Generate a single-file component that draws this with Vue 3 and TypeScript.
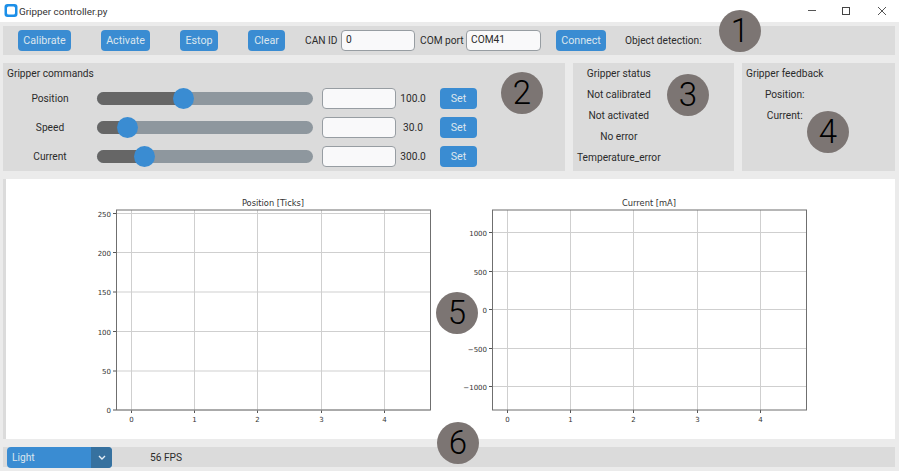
<script setup lang="ts">
interface Slider { label: string; value: string; frac: number }
interface Chart { title: string; xTicks: number[]; yTicks: { label: string; y: number }[] }

const sliders: Slider[] = [
  { label: 'Position', value: '100.0', frac: 0.388 },
  { label: 'Speed', value: '30.0', frac: 0.1 },
  { label: 'Current', value: '300.0', frac: 0.19 },
]

const status = ['Gripper status', 'Not calibrated', 'Not activated', 'No error', 'Temperature_error']
const feedback = ['Gripper feedback', 'Position:', 'Current:']

const charts: Chart[] = [
  {
    title: 'Position [Ticks]',
    xTicks: [51, 114, 177, 241, 304],
    yTicks: [
      { label: '0', y: 231 },
      { label: '50', y: 192 },
      { label: '100', y: 152.5 },
      { label: '150', y: 113 },
      { label: '200', y: 73.5 },
      { label: '250', y: 34.5 },
    ],
  },
  {
    title: 'Current [mA]',
    xTicks: [51, 114, 177, 241, 304],
    yTicks: [
      { label: '\u22121000', y: 207.5 },
      { label: '\u2212500', y: 169.5 },
      { label: '0', y: 130.5 },
      { label: '500', y: 92.5 },
      { label: '1000', y: 53.5 },
    ],
  },
]

const badges = [
  { n: 1, x: 740, y: 31 },
  { n: 2, x: 522, y: 93 },
  { n: 3, x: 688, y: 95 },
  { n: 4, x: 828, y: 132 },
  { n: 5, x: 457, y: 313 },
  { n: 6, x: 458, y: 443 },
]
</script>

<template>
  <div class="window">
    <header class="titlebar">
      <svg class="app-icon" width="14" height="14" viewBox="0 0 14 14">
        <rect x="0.5" y="0" width="13" height="13" rx="3" fill="#1c8fe8" />
        <rect x="3" y="2.5" width="8" height="8" rx="1.5" fill="#fff" />
      </svg>
      <span class="app-title">Gripper controller.py</span>
      <svg class="win-controls" width="78" height="8" viewBox="0 0 78 8">
        <path d="M0 3.5H8" stroke="#555" fill="none" />
        <rect x="34.5" y="0.5" width="7" height="7" stroke="#444" fill="none" />
        <path d="M70 0L78 8M78 0L70 8" stroke="#555" fill="none" />
      </svg>
    </header>

    <section class="toolbar panel">
      <button class="btn calibrate">Calibrate</button>
      <button class="btn activate">Activate</button>
      <button class="btn estop">Estop</button>
      <button class="btn clear">Clear</button>
      <span class="can-label">CAN ID</span>
      <div class="entry can-entry">0</div>
      <span class="com-label">COM port</span>
      <div class="entry com-entry">COM41</div>
      <button class="btn connect">Connect</button>
      <span class="detect-label">Object detection:</span>
    </section>

    <section class="middle">
      <div class="panel commands">
        <div class="cmd-title">Gripper commands</div>
        <div v-for="s in sliders" :key="s.label" class="cmd-row">
          <span class="cmd-label">{{ s.label }}</span>
          <div class="slider">
            <div class="slider-fill" :style="{ width: `${s.frac * 195 + 10}px` }" />
            <div class="slider-thumb" :style="{ left: `${s.frac * 195}px` }" />
          </div>
          <div class="entry cmd-entry" />
          <span class="cmd-value">{{ s.value }}</span>
          <button class="btn set">Set</button>
        </div>
      </div>
      <div class="panel info status">
        <div class="info-col">
          <span v-for="t in status" :key="t">{{ t }}</span>
        </div>
      </div>
      <div class="panel info feedback">
        <div class="info-col">
          <span v-for="t in feedback" :key="t">{{ t }}</span>
        </div>
      </div>
    </section>

    <section class="plots">
      <svg v-for="c in charts" :key="c.title" class="chart" width="360" height="260" viewBox="0 0 360 260">
        <text x="193" y="26.5" class="chart-title" text-anchor="middle">{{ c.title }}</text>
        <g v-for="(x, i) in c.xTicks" :key="x">
          <path :d="`M${x + 0.5} 31V231`" class="grid" />
          <path :d="`M${x + 0.5} 231V234`" class="tick" />
          <text :x="x + 0.5" y="243" class="tick-label" text-anchor="middle">{{ i }}</text>
        </g>
        <g v-for="t in c.yTicks" :key="t.label">
          <path :d="`M36 ${t.y}H350`" class="grid" />
          <path :d="`M33 ${t.y}H36`" class="tick" />
          <text x="31" :y="t.y + 3" class="tick-label" text-anchor="end">{{ t.label }}</text>
        </g>
        <rect x="36.5" y="31" width="314" height="200" class="frame" />
      </svg>
    </section>

    <footer class="panel bottom">
      <div class="theme-select">
        <span class="theme-text">Light</span>
        <span class="theme-arrow">
          <svg width="8" height="5" viewBox="0 0 8 5"><path d="M1 1L4 4L7 1" stroke="#e4eef6" stroke-width="1.4" fill="none" /></svg>
        </span>
      </div>
      <span class="fps">56 FPS</span>
    </footer>

    <div v-for="b in badges" :key="b.n" class="badge" :style="{ left: `${b.x - 21}px`, top: `${b.y - 21}px` }">
      {{ b.n }}
    </div>
  </div>
</template>

<style scoped>
.window { position: relative; width: 899px; height: 471px; overflow: hidden; background: #ebebeb; font-family: Roboto, "Liberation Sans", sans-serif; font-size: 10.2px; color: #2b2b2b; }
.titlebar { height: 22px; background: #fff; display: flex; align-items: center; padding: 0 13px 0 4px; box-sizing: border-box; }
.app-icon { flex: none; }
.app-title { margin-left: 1px; font-size: 9.9px; color: #333; }
.win-controls { margin-left: auto; }
.panel { background: #dbdbdb; }
.toolbar { margin: 4px 4px 0 3px; height: 29px; display: flex; align-items: center; box-sizing: border-box; }
.btn { border: 0; padding: 0; margin: 0; height: 21px; border-radius: 4px; background: #3a8cd2; color: #dce6ee; font: inherit; font-size: 10.7px; display: block; }
.calibrate { width: 53px; margin-left: 15px; }
.activate { width: 49px; margin-left: 30px; }
.estop { width: 38px; margin-left: 30px; }
.clear { width: 37px; margin-left: 30px; }
.can-label { margin-left: 20px; width: 36px; white-space: nowrap; }
.entry { height: 21px; box-sizing: border-box; border: 1.5px solid #979da2; border-radius: 4px; background: #f9f9fa; padding: 0 4px; line-height: 17px; font-size: 10.2px; }
.can-entry { width: 74px; }
.com-label { margin-left: 5px; width: 46px; white-space: nowrap; }
.com-entry { width: 75px; }
.connect { width: 50px; margin-left: 15px; }
.detect-label { margin-left: 19px; white-space: nowrap; }
.middle { display: flex; gap: 8px; margin: 8px 4px 0 3px; height: 108px; }
.commands { width: 562px; padding: 3px 0 0 4px; box-sizing: border-box; }
.cmd-title { height: 22px; line-height: 15px; }
.cmd-row { display: flex; align-items: center; height: 21px; margin-bottom: 8px; margin-left: -4px; }
.cmd-label { width: 94px; text-align: center; }
.slider { position: relative; width: 216px; height: 13px; border-radius: 7px; background: #8e979e; }
.slider-fill { height: 13px; border-radius: 7px 0 0 7px; background: #666; }
.slider-thumb { position: absolute; top: -4px; width: 21px; height: 21px; border-radius: 50%; background: #3a8cd2; }
.cmd-entry { width: 74px; margin-left: 9px; }
.cmd-value { width: 34px; text-align: center; }
.set { width: 37px; margin-left: 10px; }
.status { width: 161px; }
.feedback { width: 153px; }
.info { padding: 3px 0 0 4px; box-sizing: border-box; }
.info-col { display: inline-flex; flex-direction: column; align-items: center; }
.info-col span { height: 21px; line-height: 15px; white-space: nowrap; }
.plots { display: flex; gap: 16px; margin: 8px 4px 0 3px; height: 260px; background: #fff; border-left: 3px solid #dbdbdb; padding-left: 74px; box-sizing: border-box; }
.chart { display: block; flex: none; }
.chart-title { font-family: "DejaVu Sans", sans-serif; font-size: 8.3px; fill: #333; }
.tick-label { font-family: "DejaVu Sans", sans-serif; font-size: 7px; fill: #333; }
.grid { stroke: #cfcfcf; stroke-width: 1; fill: none; }
.tick { stroke: #555; stroke-width: 1; fill: none; }
.frame { stroke: #6f6f6f; stroke-width: 1; fill: none; }
.bottom { margin: 8px 4px 0 3px; height: 20px; display: flex; align-items: flex-start; padding-left: 4px; box-sizing: border-box; }
.theme-select { width: 105px; height: 21px; border-radius: 4px; background: #3a8cd2; display: flex; overflow: hidden; color: #dce6ee; }
.theme-text { flex: 1; padding-left: 5px; line-height: 21px; font-size: 10.2px; }
.theme-arrow { width: 21px; background: #36719f; display: flex; align-items: center; justify-content: center; }
.fps { margin-left: 38px; line-height: 21px; }
.badge { position: absolute; width: 42px; height: 42px; border-radius: 50%; background: #7c7573; color: #000; font-size: 33px; font-weight: 300; line-height: 42px; text-align: center; }
</style>
